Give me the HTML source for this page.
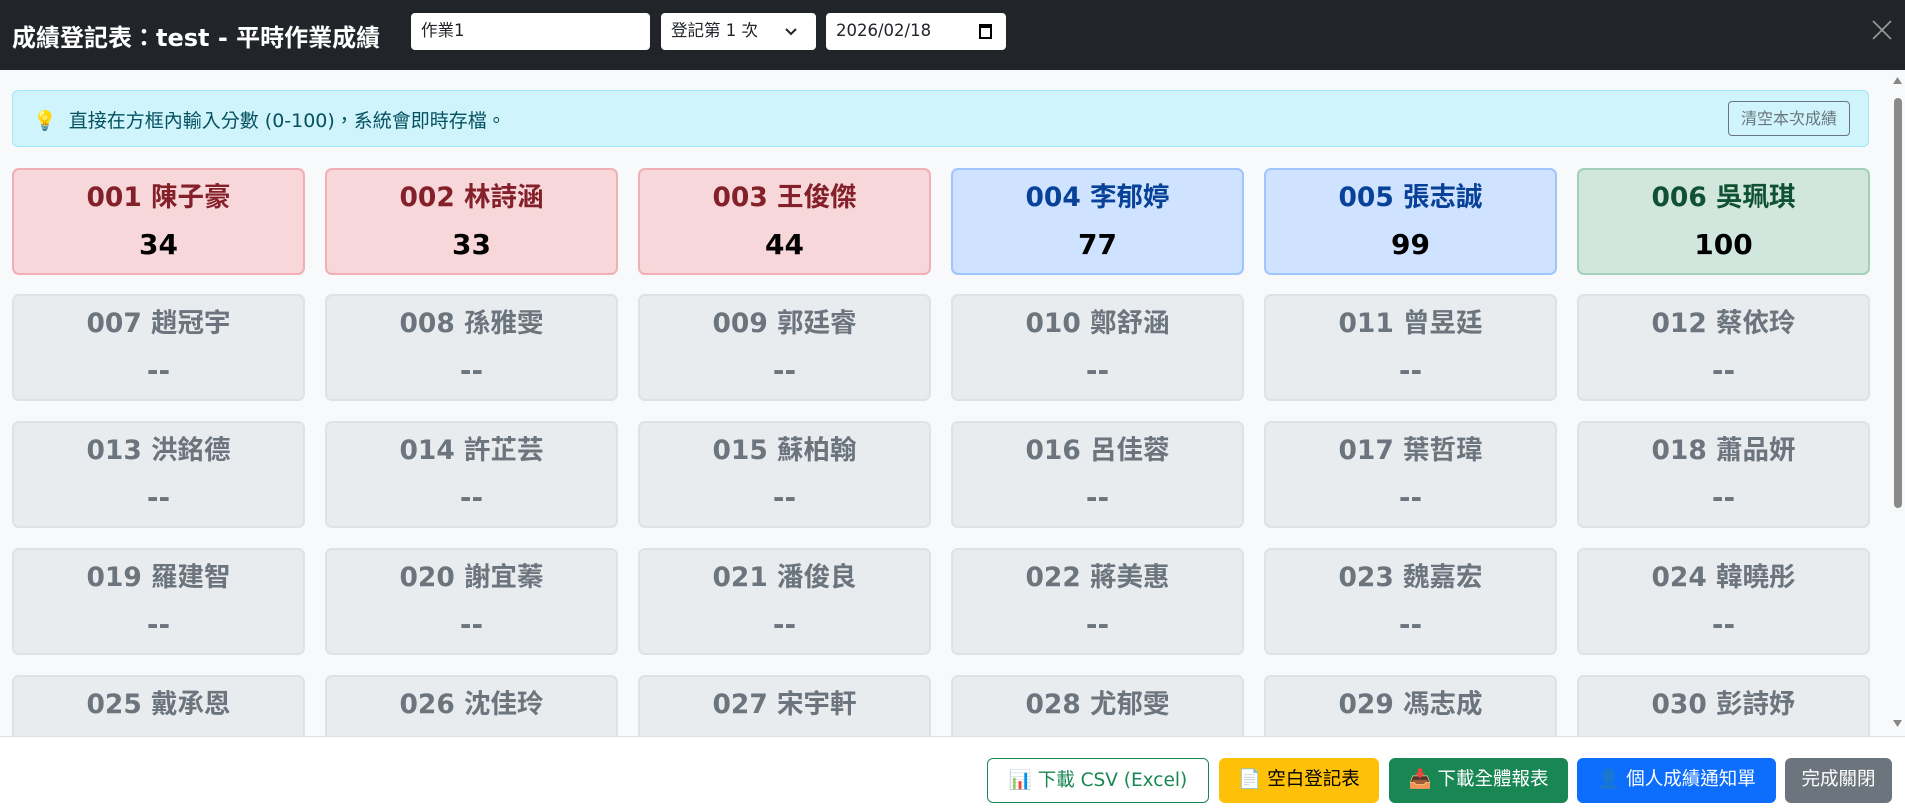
<!DOCTYPE html>
<html><head><meta charset="utf-8"><style>
*{box-sizing:border-box;margin:0;padding:0}
body{width:1905px;height:808px;overflow:hidden;background:#f8f9fa;font-family:"DejaVu Sans","Noto Sans CJK TC",sans-serif;position:relative}
.hdr{position:absolute;left:0;top:0;width:1905px;height:70px;background:#212529;color:#fff}
.title{position:absolute;left:12px;top:18px;font-size:24px;font-weight:bold;white-space:nowrap}
.inp{position:absolute;top:13px;height:37px;background:#fff;border-radius:4px;font-size:16.5px;color:#212529;padding:8px 10px;line-height:20px;white-space:nowrap}
.close{position:absolute;left:1872px;top:20px;width:20px;height:20px}
.alert{position:absolute;left:12px;top:90px;width:1857px;height:57px;background:#cff4fc;border:1px solid #9eeaf9;border-radius:6px;color:#055160;font-size:19px}
.alert .t{position:absolute;left:20px;top:15px;white-space:nowrap}
.clr{position:absolute;right:18px;top:10px;width:122px;height:35px;border:1px solid #6c757d;border-radius:4px;font-size:16px;color:#6c757d;text-align:center;line-height:33px}
.card{position:absolute;width:293px;height:107px;border-radius:7px;border:2px solid #dee2e6;background:#e9ecef;text-align:center;font-weight:bold;color:#6c757d}
.card .n{font-size:26.5px;margin-top:10px;line-height:36px}
.card .s{font-size:28px;margin-top:11px;line-height:36px;color:#6c757d}
.r{background:#f8d7da;border-color:#f1aeb5;color:#842029}
.b{background:#cfe2ff;border-color:#9ec5fe;color:#084298}
.g{background:#d1e7dd;border-color:#a3cfbb;color:#0f5132}
.r .s,.b .s,.g .s{color:#000}
.foot{position:absolute;left:0;top:736px;width:1905px;height:72px;background:#fff;border-top:1px solid #dee2e6}
.btn{position:absolute;top:21px;height:45px;border-radius:6px;font-size:18.5px;line-height:43px;text-align:center;white-space:nowrap;color:#fff}
.sb{position:absolute;left:1890px;top:70px;width:15px;height:666px;background:#f8f9fa}
.thumb{position:absolute;left:4px;top:28px;width:8px;height:410px;background:#8a8a8a;border-radius:4px}
</style></head><body>
<div class="hdr">
<div class="title">成績登記表：test - 平時作業成績</div>
<div class="inp" style="left:411px;width:239px">作業1</div>
<div class="inp" style="left:661px;width:155px">登記第 1 次<svg style="position:absolute;right:18px;top:14px" width="14" height="10" viewBox="0 0 14 10"><path d="M2 2l5 5 5-5" stroke="#212529" stroke-width="2" fill="none"/></svg></div>
<div class="inp" style="left:826px;width:180px">2026/02/18<svg style="position:absolute;right:14px;top:10px" width="13" height="16" viewBox="0 0 13 16"><rect x="1" y="2" width="11" height="13" stroke="#000" stroke-width="2" fill="none"/><rect x="1" y="2" width="11" height="3" fill="#000"/></svg></div>
<svg class="close" viewBox="0 0 20 20"><path d="M1 1L19 19M19 1L1 19" stroke="#9a9a9a" stroke-width="1.6"/></svg>
</div>
<div class="alert"><div class="t">💡 &nbsp;直接在方框內輸入分數 (0-100)，系統會即時存檔。</div><div class="clr">清空本次成績</div></div>

<div class="card r" style="left:12px;top:168px"><div class="n">001 陳子豪</div><div class="s">34</div></div>
<div class="card r" style="left:325px;top:168px"><div class="n">002 林詩涵</div><div class="s">33</div></div>
<div class="card r" style="left:638px;top:168px"><div class="n">003 王俊傑</div><div class="s">44</div></div>
<div class="card b" style="left:951px;top:168px"><div class="n">004 李郁婷</div><div class="s">77</div></div>
<div class="card b" style="left:1264px;top:168px"><div class="n">005 張志誠</div><div class="s">99</div></div>
<div class="card g" style="left:1577px;top:168px"><div class="n">006 吳珮琪</div><div class="s">100</div></div>

<div class="card" style="left:12px;top:294px"><div class="n">007 趙冠宇</div><div class="s">--</div></div>
<div class="card" style="left:325px;top:294px"><div class="n">008 孫雅雯</div><div class="s">--</div></div>
<div class="card" style="left:638px;top:294px"><div class="n">009 郭廷睿</div><div class="s">--</div></div>
<div class="card" style="left:951px;top:294px"><div class="n">010 鄭舒涵</div><div class="s">--</div></div>
<div class="card" style="left:1264px;top:294px"><div class="n">011 曾昱廷</div><div class="s">--</div></div>
<div class="card" style="left:1577px;top:294px"><div class="n">012 蔡依玲</div><div class="s">--</div></div>

<div class="card" style="left:12px;top:421px"><div class="n">013 洪銘德</div><div class="s">--</div></div>
<div class="card" style="left:325px;top:421px"><div class="n">014 許芷芸</div><div class="s">--</div></div>
<div class="card" style="left:638px;top:421px"><div class="n">015 蘇柏翰</div><div class="s">--</div></div>
<div class="card" style="left:951px;top:421px"><div class="n">016 呂佳蓉</div><div class="s">--</div></div>
<div class="card" style="left:1264px;top:421px"><div class="n">017 葉哲瑋</div><div class="s">--</div></div>
<div class="card" style="left:1577px;top:421px"><div class="n">018 蕭品妍</div><div class="s">--</div></div>

<div class="card" style="left:12px;top:548px"><div class="n">019 羅建智</div><div class="s">--</div></div>
<div class="card" style="left:325px;top:548px"><div class="n">020 謝宜蓁</div><div class="s">--</div></div>
<div class="card" style="left:638px;top:548px"><div class="n">021 潘俊良</div><div class="s">--</div></div>
<div class="card" style="left:951px;top:548px"><div class="n">022 蔣美惠</div><div class="s">--</div></div>
<div class="card" style="left:1264px;top:548px"><div class="n">023 魏嘉宏</div><div class="s">--</div></div>
<div class="card" style="left:1577px;top:548px"><div class="n">024 韓曉彤</div><div class="s">--</div></div>

<div class="card" style="left:12px;top:675px"><div class="n">025 戴承恩</div><div class="s">--</div></div>
<div class="card" style="left:325px;top:675px"><div class="n">026 沈佳玲</div><div class="s">--</div></div>
<div class="card" style="left:638px;top:675px"><div class="n">027 宋宇軒</div><div class="s">--</div></div>
<div class="card" style="left:951px;top:675px"><div class="n">028 尤郁雯</div><div class="s">--</div></div>
<div class="card" style="left:1264px;top:675px"><div class="n">029 馮志成</div><div class="s">--</div></div>
<div class="card" style="left:1577px;top:675px"><div class="n">030 彭詩妤</div><div class="s">--</div></div>

<div class="sb"><svg style="position:absolute;left:3px;top:7px" width="9" height="7"><path d="M0 7L4.5 0 9 7z" fill="#888"/></svg><div class="thumb"></div><svg style="position:absolute;left:3px;top:650px" width="9" height="7"><path d="M0 0L4.5 7 9 0z" fill="#888"/></svg></div>

<div class="foot">
<div class="btn" style="left:987px;width:222px;border:1px solid #198754;color:#198754;background:#fff">📊 下載 CSV (Excel)</div>
<div class="btn" style="left:1219px;width:160px;background:#ffc107;color:#000">📄 空白登記表</div>
<div class="btn" style="left:1389px;width:179px;background:#198754">📥 下載全體報表</div>
<div class="btn" style="left:1577px;width:199px;background:#0d6efd">👤 個人成績通知單</div>
<div class="btn" style="left:1785px;width:107px;background:#6c757d">完成關閉</div>
</div>
</body></html>
